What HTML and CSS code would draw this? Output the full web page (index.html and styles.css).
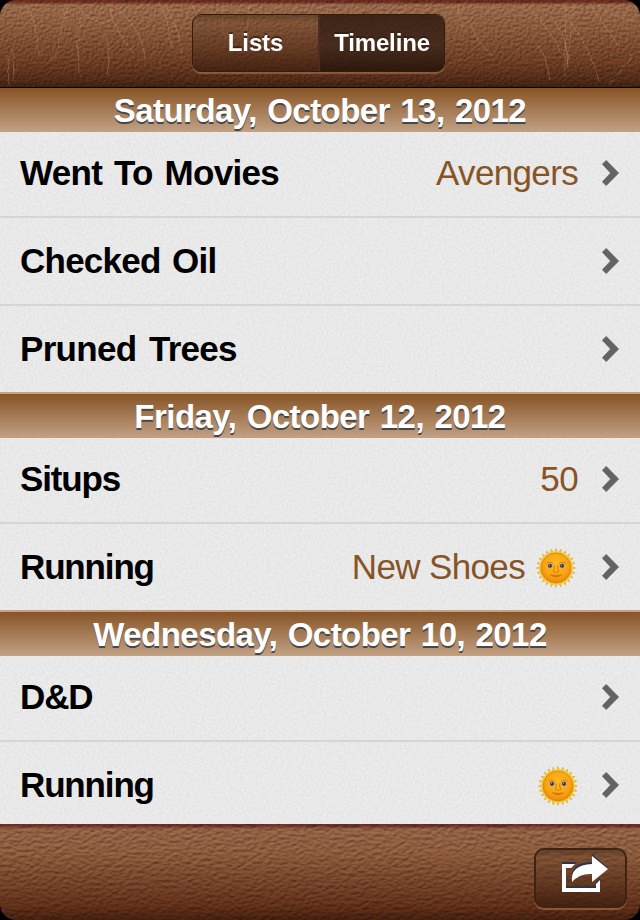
FILE: index.html
```html
<!DOCTYPE html>
<html lang="en">
<head>
<meta charset="utf-8">
<title>Timeline</title>
<link rel="stylesheet" href="styles.css">
</head>
<body>
<svg class="defs" aria-hidden="true">
  <defs>
    <filter id="leather" x="0" y="0" width="100%" height="100%" color-interpolation-filters="sRGB">
      <feTurbulence type="fractalNoise" baseFrequency="0.33 0.38" numOctaves="2" seed="7" result="n"/>
      <feDiffuseLighting in="n" surfaceScale="1.3" diffuseConstant="0.72" lighting-color="#fff"><feDistantLight azimuth="235" elevation="45"/></feDiffuseLighting>
    </filter>
    <filter id="grain" x="0" y="0" width="100%" height="100%" color-interpolation-filters="sRGB">
      <feTurbulence type="fractalNoise" baseFrequency="0.2 0.33" numOctaves="2" seed="12" result="n"/>
      <feDiffuseLighting in="n" surfaceScale="1.2" diffuseConstant="0.72" lighting-color="#fff"><feDistantLight azimuth="250" elevation="45"/></feDiffuseLighting>
    </filter>
    <filter id="paper" x="0" y="0" width="100%" height="100%" color-interpolation-filters="sRGB">
      <feTurbulence type="fractalNoise" baseFrequency="0.45" numOctaves="3" seed="3"/>
      <feColorMatrix values="0.08 0 0 0 0.872  0.08 0 0 0 0.872  0.08 0 0 0 0.872  0 0 0 0 1"/>
    </filter>
    <filter id="rough" color-interpolation-filters="sRGB"><feTurbulence type="fractalNoise" baseFrequency="0.12" numOctaves="2" seed="4"/><feDisplacementMap in="SourceGraphic" scale="5"/></filter>
    <radialGradient id="face" cx="50%" cy="40%" r="60%"><stop offset="0" stop-color="#ffbd24"/><stop offset=".65" stop-color="#fba514"/><stop offset="1" stop-color="#e8860c"/></radialGradient>
    <path id="ray" d="M-2.3-13.5L0-19.5L2.3-13.5Z" fill="#ffd51f" stroke="#d29d1c" stroke-width=".5"/>
    <g id="rays">
      <use href="#ray"/><use href="#ray" transform="rotate(15)"/><use href="#ray" transform="rotate(30)"/>
      <use href="#ray" transform="rotate(45)"/><use href="#ray" transform="rotate(60)"/><use href="#ray" transform="rotate(75)"/>
    </g>
    <symbol id="sun" viewBox="-20 -20 40 40">
      <use href="#rays"/><use href="#rays" transform="rotate(90)"/><use href="#rays" transform="rotate(180)"/><use href="#rays" transform="rotate(270)"/>
      <circle r="15" fill="url(#face)" stroke="#d67c0b" stroke-width=".7"/>
      <path d="M-9.5-4.5Q-6-7.5-3-4M9.5-4.5Q6-7.5 3-4M-2-3Q-1 1-2.8 3.3Q0 5.8 2.8 3.3Q1 1 2-3" fill="none" stroke="#d87908" stroke-width="1"/>
      <ellipse cx="-6" cy="-2.2" rx="3.2" ry="2.3" fill="#dca87a"/><ellipse cx="6" cy="-2.2" rx="3.2" ry="2.3" fill="#dca87a"/>
      <circle cx="-6" cy="-2.2" r="2" fill="#29344a"/><circle cx="6" cy="-2.2" r="2" fill="#29344a"/>
      <circle cx="-6.4" cy="-2.8" r=".6" fill="#b9c6d6"/><circle cx="5.6" cy="-2.8" r=".6" fill="#b9c6d6"/>
      <path d="M-5.5 6.8Q0 8 5.5 6.8Q0 11-5.5 6.8Z" fill="#e57b12" stroke="#c96a0b" stroke-width=".7"/>
    </symbol>
    <symbol id="chevron" viewBox="0 0 17 26"><path d="M.4 4.2L4.2.4L16.6 13L4.2 25.6L.4 21.8L8.6 13Z" fill="#636363" stroke="#636363" stroke-width=".8"/></symbol>
  </defs>
</svg>
<div class="screen">
  <header class="bar top">
    <svg class="texture" width="640" height="87"><rect width="640" height="87" filter="url(#leather)"/></svg>
    <svg class="scratches" width="640" height="87" viewBox="0 0 640 87">
      <g filter="url(#rough)" fill="none" stroke="#deb28c" stroke-opacity=".32" stroke-width=".9">
        <path d="M25 3Q38 22 39 55M68 3Q62 40 51 62M77 5Q90 25 110 22M108 3Q115 34 134 53M113 5Q144 30 145 60M160 3Q170 22 171 48M166 5Q180 32 182 58M190 2L195 12M84 15Q73 42 80 75M8 55L9 85M13 50L14 82M105 35Q112 50 107 75M222 3Q219 22 226 40M250 5L246 42"/>
        <path d="M458 5L462 30M530 8Q552 32 562 55M552 18Q570 42 568 68M566 3L565 76M574 3L567 67M590 4Q603 23 620 48M570 22Q590 47 598 80M535 42Q547 55 550 80M597 5Q617 19 635 21M468 20Q480 47 492 55M632 55L610 85"/>
      </g>
    </svg>
    <nav class="segments">
      <span class="segment">Lists</span>
      <span class="segment active">Timeline</span>
    </nav>
  </header>
  <main class="list">
    <svg class="paper" width="640" height="736"><rect width="640" height="736" filter="url(#paper)"/></svg>
    <h2 class="day first">Saturday, October 13, 2012</h2>
    <div class="row lead"><span class="name movies">Went To Movies</span><span class="value">Avengers</span><svg class="chevron"><use href="#chevron"/></svg></div>
    <div class="row"><span class="name oil">Checked Oil</span><svg class="chevron"><use href="#chevron"/></svg></div>
    <div class="row last"><span class="name trees">Pruned Trees</span><svg class="chevron"><use href="#chevron"/></svg></div>
    <h2 class="day">Friday, October 12, 2012</h2>
    <div class="row lead"><span class="name">Situps</span><span class="value">50</span><svg class="chevron"><use href="#chevron"/></svg></div>
    <div class="row last"><span class="name">Running</span><span class="value">New Shoes</span><svg class="sun after-text"><use href="#sun"/></svg><svg class="chevron"><use href="#chevron"/></svg></div>
    <h2 class="day">Wednesday, October 10, 2012</h2>
    <div class="row lead"><span class="name">D&amp;D</span><svg class="chevron"><use href="#chevron"/></svg></div>
    <div class="row last"><span class="name">Running</span><svg class="sun"><use href="#sun"/></svg><svg class="chevron"><use href="#chevron"/></svg></div>
  </main>
  <footer class="bar bottom">
    <svg class="texture" width="640" height="96"><rect width="640" height="96" filter="url(#grain)"/></svg>
    <button class="share" aria-label="Share">
      <svg class="share-icon" width="48" height="40" viewBox="561 854 48 40">
        <g fill="#2b354a" transform="translate(0 -2)"><path d="M562 864H577L572 868H566V888H596V884L600 880V892H562Z"/><path d="M572 882Q570 864 592 864V856L608 870L592 883V875Q580 873 572 882Z"/></g>
        <g fill="#fff"><path d="M562 864H575L571 868H566V888H596V884L600 880V892H562Z"/><path d="M572 882Q570 865 592 864V856L608 869L592 882V874Q580 873 572 882Z"/></g>
      </svg>
    </button>
  </footer>
</div>
</body>
</html>
```
FILE: styles.css
```css
* { box-sizing: border-box; }
body { margin: 0; background: #000; font-family: "Liberation Sans", Arial, sans-serif; }
.defs { position: absolute; width: 0; height: 0; }
.screen { width: 640px; height: 920px; overflow: hidden; border-radius: 16px; display: flex; flex-direction: column; }
.bar { position: relative; display: flex; overflow: hidden; isolation: isolate; }
.texture, .scratches { position: absolute; left: 0; top: 0; z-index: -1; }
.texture { mix-blend-mode: overlay; opacity: .5; }
.top { height: 88px; justify-content: center; padding-top: 14px; border-bottom: 1px solid #0c0503; background: linear-gradient(#692c20 0 2px, #97694a 5px, #88583a 30px, #6c3d24 62px, #532b19 79px, #40200f 87px); }
.bottom { height: 96px; justify-content: flex-end; padding: 24px 13px 0 0; background: linear-gradient(#6d2d24 0 2px, #8f6144 5px, #8b5b3c 28px, #77472c 53px, #602f1a 82px, #43200f 96px); }
.segments { display: flex; width: 253px; height: 58px; border: 1.5px solid #321c0e; border-radius: 9px; overflow: hidden; box-shadow: 0 2px 1px #a56f49aa; margin-right: 3px; }
.segment { flex: 0 0 125px; display: flex; align-items: center; justify-content: center; color: #fff; font-weight: bold; font-size: 24px; letter-spacing: -.15px; text-shadow: 0 -2px 0 #2d180daa; background: linear-gradient(#4f3320aa, #6c462d66 8px, #512d1888 35px, #351b0daa); }
.active { flex: 1; border-left: 2px solid #4e2c26; background: linear-gradient(#2c1a10d9, #3a2418cc 30px, #24130ad9); }
.list { position: relative; height: 736px; overflow: hidden; isolation: isolate; background: #e8e8e8; }
.paper { position: absolute; inset: 0; z-index: -1; }
.day { margin: 0; height: 46px; padding-top: 3px; display: flex; justify-content: center; line-height: 40px; font-size: 33px; letter-spacing: -.55px; word-spacing: 1.8px; color: #fff; white-space: nowrap; border-top: 2px solid #c5a283; background: linear-gradient(#875426, #c2a184); text-shadow: 0 2px 0 #464749; }
.first { height: 44px; border-top: 0; }
.row { display: flex; align-items: center; height: 88px; padding: 0 21px 0 20px; border-bottom: 2px solid #d5d5d5; font-size: 35px; line-height: 42px; white-space: nowrap; }
.lead { height: 86px; padding-bottom: 2px; }
.last { height: 86px; border-bottom: 0; }
.name { flex: 1; font-weight: bold; color: #000; letter-spacing: -1.15px; }
.movies { letter-spacing: -.7px; word-spacing: 2.8px; }
.oil { letter-spacing: -.75px; word-spacing: 2.5px; }
.trees { letter-spacing: -.7px; word-spacing: 3.5px; }
.value { color: #875426; letter-spacing: -.65px; }
.chevron { width: 17px; height: 26px; margin-left: 24px; }
.sun { width: 40px; height: 40px; margin-top: 2px; }
.sun.after-text { margin: 2px 2px 0 11px; }
.share { width: 93px; height: 60px; padding: 0 0 8px 9px; border: 2px solid #3d2412; border-radius: 10px; background: linear-gradient(#50301faa, #6c462d66 8px, #512d1888 35px, #351b0daa); box-shadow: 0 2px 1px #a56f49aa; display: flex; align-items: center; justify-content: center; }
.share-icon { overflow: visible; }
```
